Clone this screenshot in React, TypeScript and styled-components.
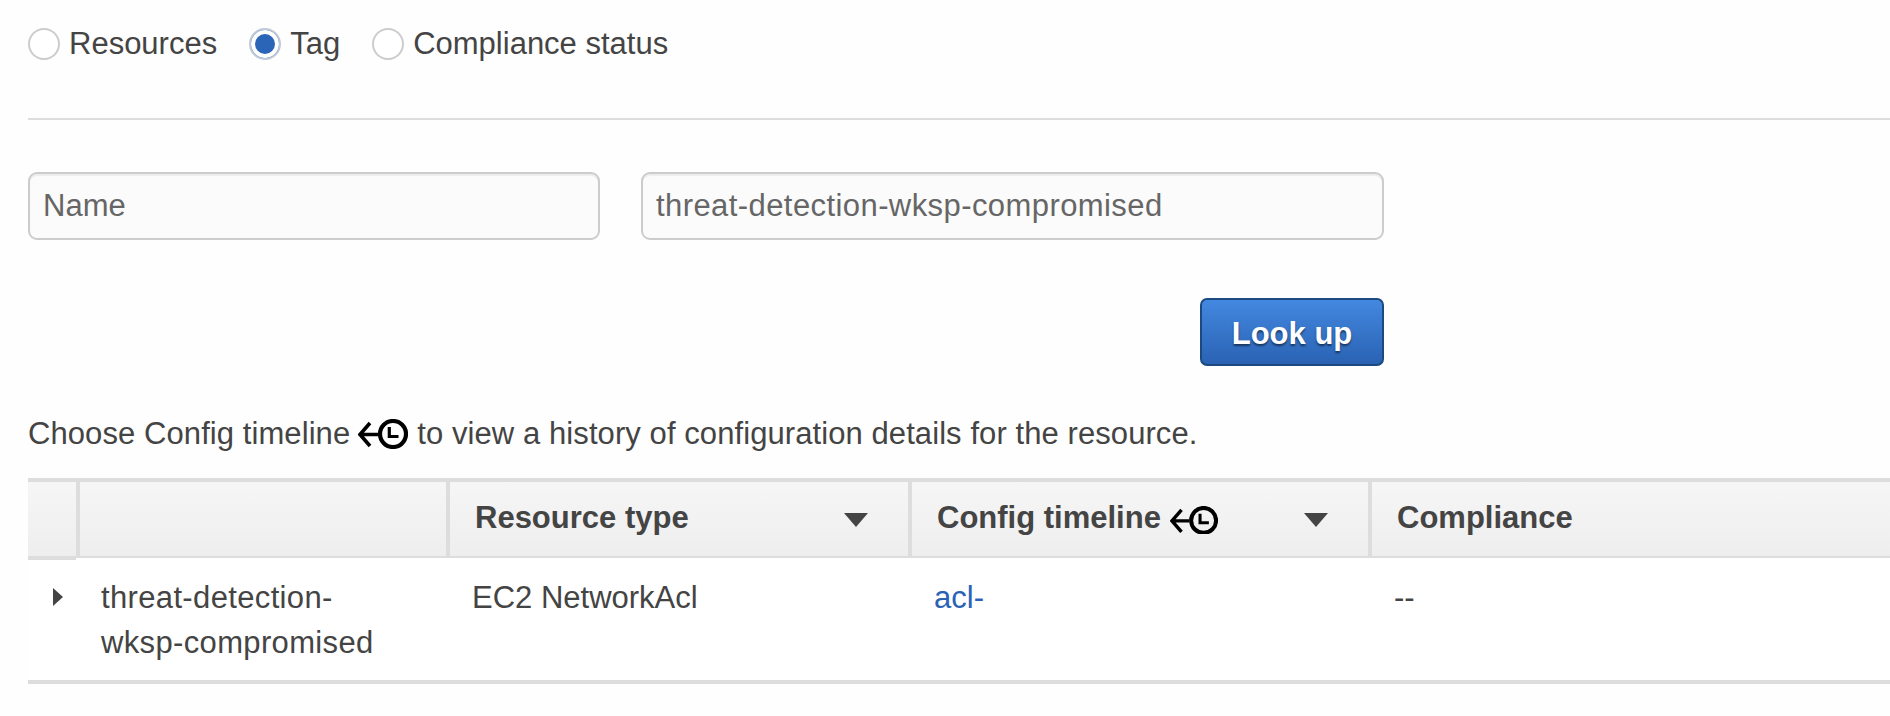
import React from "react";
import styled, { createGlobalStyle } from "styled-components";

const GlobalStyle = createGlobalStyle`
  html, body {
    margin: 0;
    padding: 0;
    background: #fefefe;
  }
  body {
    font-family: "Liberation Sans", Arial, sans-serif;
    font-size: 31px;
    color: #444;
    overflow: hidden;
  }
`;

const Page = styled.div`
  padding: 28px 0 0 28px;
`;

const RadioRow = styled.div`
  display: flex;
  align-items: center;
  gap: 32px;
  height: 31px;
`;

const RadioLabel = styled.label`
  display: flex;
  align-items: center;
  gap: 9px;
  line-height: 31px;
`;

const Radio = styled.input.attrs({ type: "radio" })`
  appearance: none;
  box-sizing: border-box;
  margin: 0;
  width: 32px;
  height: 32px;
  border-radius: 50%;
  border: 2px solid #ccc;
  background: #fff;

  &:checked {
    border-color: #c0cad6;
    background: #2a65b8;
    box-shadow: inset 0 0 0 4px #fff;
  }
`;

const Divider = styled.hr`
  margin: 59px 0 0;
  border: 0;
  height: 2px;
  background: #ddd;
`;

const Form = styled.div`
  width: 1356px;
  margin-top: 52px;
`;

const InputRow = styled.div`
  display: grid;
  grid-template-columns: 572px 743px;
  gap: 41px;
`;

const TextInput = styled.input<{ $tracking?: number }>`
  box-sizing: border-box;
  height: 68px;
  width: 100%;
  padding: 0 13px;
  border: 2px solid #ccc;
  border-radius: 9px;
  background: #fbfbfb;
  box-shadow: inset 0 2px 1px rgba(0, 0, 0, 0.06);
  font: inherit;
  letter-spacing: ${(p) => p.$tracking ?? 0}px;
  color: #666;
  outline: none;
`;

const ButtonRow = styled.div`
  display: flex;
  justify-content: flex-end;
  margin-top: 58px;
`;

const LookUpButton = styled.button`
  box-sizing: border-box;
  width: 184px;
  height: 68px;
  padding: 4px 0 0;
  border: 2px solid #1c4a80;
  border-radius: 7px;
  background: linear-gradient(to bottom, #4388e0, #2a62b3);
  color: #fff;
  font: inherit;
  font-weight: bold;
  text-shadow: 0 2px 2px rgba(0, 0, 0, 0.5);
`;

const Hint = styled.p`
  display: flex;
  align-items: center;
  margin: 53px 0 0;
  height: 30px;
  line-height: 30px;
  letter-spacing: 0.08px;
`;

const HintIcon = styled.span`
  display: inline-flex;
  margin: 0 9px 0 8px;
`;

const Table = styled.div`
  margin-top: 29px;
  border-top: 4px solid #ddd;
  border-bottom: 4px solid #ddd;
`;

const HeaderRow = styled.div`
  display: grid;
  grid-template-columns: 48px 370px 462px 460px 1fr;
  height: 74px;
  border-bottom: 2px solid #ddd;
  background: linear-gradient(to bottom, #f6f6f6, #eee);
`;

const HeaderCell = styled.div`
  display: flex;
  align-items: center;
  box-sizing: border-box;
  min-width: 0;
  padding: 0 40px 0 25px;
  border-left: 4px solid #ddd;
  font-weight: bold;
  white-space: nowrap;

  &:first-child {
    padding: 0;
    border-left: 0;
    box-shadow: 0 4px 0 #ddd;
  }
`;

const HeaderLabel = styled.span`
  flex: 1;
  display: flex;
  align-items: center;
  gap: 9px;
  margin-top: -2px;

  svg {
    margin-top: 4px;
  }
`;

const SortCaret = styled.span`
  width: 0;
  height: 0;
  margin-top: 2px;
  border-left: 12px solid transparent;
  border-right: 12px solid transparent;
  border-top: 14px solid #444;
`;

const BodyRow = styled.div`
  display: grid;
  grid-template-columns: 48px 370px 462px 460px 1fr;
  height: 122px;
  background: #fff;
`;

const BodyCell = styled.div`
  box-sizing: border-box;
  padding: 17px 22px 0 26px;
  line-height: 45px;
  min-width: 0;
`;

const ExpandCell = styled.div`
  padding: 30px 0 0 25px;
`;

const ExpandArrow = styled.span`
  display: block;
  width: 0;
  height: 0;
  border-top: 9px solid transparent;
  border-bottom: 9px solid transparent;
  border-left: 10px solid #444;
`;

const NameCell = styled(BodyCell)`
  padding-left: 25px;
  padding-right: 50px;
  letter-spacing: 0.35px;
`;

const ResourceLink = styled.a`
  color: #2a62b5;
  text-decoration: none;
`;

const TimelineIcon = ({ width }: { width: number }) => (
  <svg width={width} height={(width * 30) / 50} viewBox="0 0 50 30" fill="none" stroke="#000">
    <path d="M12 4 L2 15.5 L12 27 M2 15.5 H20" strokeWidth="3.6" />
    <circle cx="35" cy="15" r="13" strokeWidth="4.2" />
    <path d="M31.3 8 V17.5 H40.5" strokeWidth="3.2" />
  </svg>
);

export default function App() {
  return (
    <Page>
      <GlobalStyle />
      <RadioRow>
        <RadioLabel>
          <Radio name="lookup" />
          Resources
        </RadioLabel>
        <RadioLabel>
          <Radio name="lookup" defaultChecked />
          Tag
        </RadioLabel>
        <RadioLabel>
          <Radio name="lookup" />
          Compliance status
        </RadioLabel>
      </RadioRow>
      <Divider />
      <Form>
        <InputRow>
          <TextInput defaultValue="Name" />
          <TextInput defaultValue="threat-detection-wksp-compromised" $tracking={0.42} />
        </InputRow>
        <ButtonRow>
          <LookUpButton>Look up</LookUpButton>
        </ButtonRow>
      </Form>
      <Hint>
        Choose Config timeline
        <HintIcon>
          <TimelineIcon width={50} />
        </HintIcon>
        to view a history of configuration details for the resource.
      </Hint>
      <Table>
        <HeaderRow>
          <HeaderCell />
          <HeaderCell />
          <HeaderCell>
            <HeaderLabel>Resource type</HeaderLabel>
            <SortCaret />
          </HeaderCell>
          <HeaderCell>
            <HeaderLabel>
              Config timeline
              <TimelineIcon width={48} />
            </HeaderLabel>
            <SortCaret />
          </HeaderCell>
          <HeaderCell>
            <HeaderLabel>Compliance</HeaderLabel>
          </HeaderCell>
        </HeaderRow>
        <BodyRow>
          <ExpandCell>
            <ExpandArrow />
          </ExpandCell>
          <NameCell>threat-detection-wksp-compromised</NameCell>
          <BodyCell>EC2 NetworkAcl</BodyCell>
          <BodyCell>
            <ResourceLink href="#">acl-</ResourceLink>
          </BodyCell>
          <BodyCell>--</BodyCell>
        </BodyRow>
      </Table>
    </Page>
  );
}
